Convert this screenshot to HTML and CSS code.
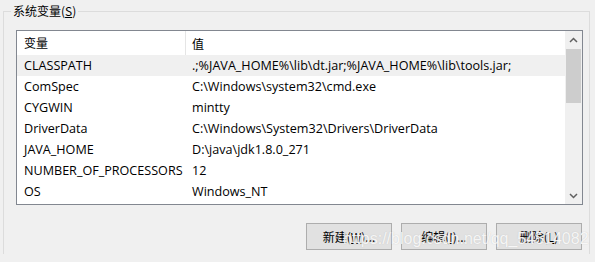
FILE: index.html
```html
<!DOCTYPE html>
<html lang="zh-CN">
<head>
  <meta charset="UTF-8">
  <title>系统变量</title>
  <link rel="stylesheet" href="styles.css">
</head>
<body>

  <fieldset class="group">
    <legend>系统变量(<u>S</u>)</legend>

    <div class="listbox">
      <div class="list">
        <div class="row head">
          <div class="name">变量</div>
          <div class="value">值</div>
        </div>
        <div class="row selected">
          <div class="name">CLASSPATH</div>
          <div class="value">.;%JAVA_HOME%\lib\dt.jar;%JAVA_HOME%\lib\tools.jar;</div>
        </div>
        <div class="row">
          <div class="name">ComSpec</div>
          <div class="value">C:\Windows\system32\cmd.exe</div>
        </div>
        <div class="row">
          <div class="name">CYGWIN</div>
          <div class="value">mintty</div>
        </div>
        <div class="row">
          <div class="name">DriverData</div>
          <div class="value">C:\Windows\System32\Drivers\DriverData</div>
        </div>
        <div class="row">
          <div class="name">JAVA_HOME</div>
          <div class="value">D:\java\jdk1.8.0_271</div>
        </div>
        <div class="row">
          <div class="name">NUMBER_OF_PROCESSORS</div>
          <div class="value">12</div>
        </div>
        <div class="row">
          <div class="name">OS</div>
          <div class="value">Windows_NT</div>
        </div>
      </div>

      <div class="scrollbar">
        <div class="arrow">
          <svg width="9" height="6" viewBox="0 0 9 6"><path d="M1 5 L4.5 1.5 L8 5" fill="none" stroke="#606060" stroke-width="1.5"/></svg>
        </div>
        <div class="track">
          <div class="thumb"></div>
        </div>
        <div class="arrow">
          <svg width="9" height="6" viewBox="0 0 9 6"><path d="M1 1 L4.5 4.5 L8 1" fill="none" stroke="#606060" stroke-width="1.5"/></svg>
        </div>
      </div>
    </div>

    <div class="buttons">
      <button>新建(<u>W</u>)...</button>
      <button>编辑(<u>I</u>)...</button>
      <button>删除(<u>L</u>)</button>
    </div>
  </fieldset>

  <div class="watermark">https://blog.csdn.net/qq_54514082</div>

</body>
</html>
```

FILE: styles.css
```css
body {
  margin: 0;
  background-color: #f0f0f0;
  font-family: 'Open Sans', 'Noto Sans CJK SC', sans-serif;
  font-size: 12.6px;
  color: #000;
  height: 262px;
  overflow: hidden;
  position: relative;
}
.group {
  margin: 3px 5px 0 3px;
  padding: 11px 6px 4px 12px;
  border: 1px solid #dcdcdc;
  border-bottom: none;
}
legend {
  font-family: 'Noto Sans CJK SC', sans-serif;
  font-size: 12px;
  line-height: 16px;
  padding: 0 2px;
  margin-left: -5px;
}
.listbox {
  display: flex;
  border: 1px solid #828790;
  background: #fff;
  height: 173px;
  overflow: hidden;
}
.list {
  flex: 1;
}
.row {
  display: flex;
  height: 21px;
  align-items: center;
  white-space: nowrap;
}
.row.head {
  height: 24px;
  font-family: 'Noto Sans CJK SC', sans-serif;
  font-size: 12px;
}
.row.selected {
  background: #f0f0f0;
}
.name {
  width: 161px;
  padding-left: 7px;
  flex-shrink: 0;
}
.head .name {
  border-right: 1px solid #e5e5e5;
  height: 24px;
  line-height: 24px;
}
.value {
  padding-left: 7px;
}
.head .value {
  padding-left: 6px;
}
.scrollbar {
  width: 17px;
  background: #f0f0f0;
  display: flex;
  flex-direction: column;
}
.arrow {
  height: 17px;
  display: flex;
  align-items: center;
  justify-content: center;
}
.track {
  flex: 1;
}
.thumb {
  margin: 1px 1px 0 1px;
  height: 54px;
  background: #cdcdcd;
}
.buttons {
  display: flex;
  justify-content: flex-end;
  gap: 9px;
  margin-top: 18px;
  padding-right: 1px;
}
button {
  width: 86px;
  height: 27px;
  background: #e1e1e1;
  border: 1px solid #adadad;
  font-family: 'Noto Sans CJK SC', sans-serif;
  font-size: 12px;
  color: #000;
  padding: 0;
}
.watermark {
  position: absolute;
  left: 343px;
  top: 230px;
  font-family: 'Liberation Sans', sans-serif;
  font-size: 16px;
  color: rgba(255, 255, 255, 0.85);
  text-shadow: 0 0 1px rgba(170, 170, 170, 0.6);
}
```
